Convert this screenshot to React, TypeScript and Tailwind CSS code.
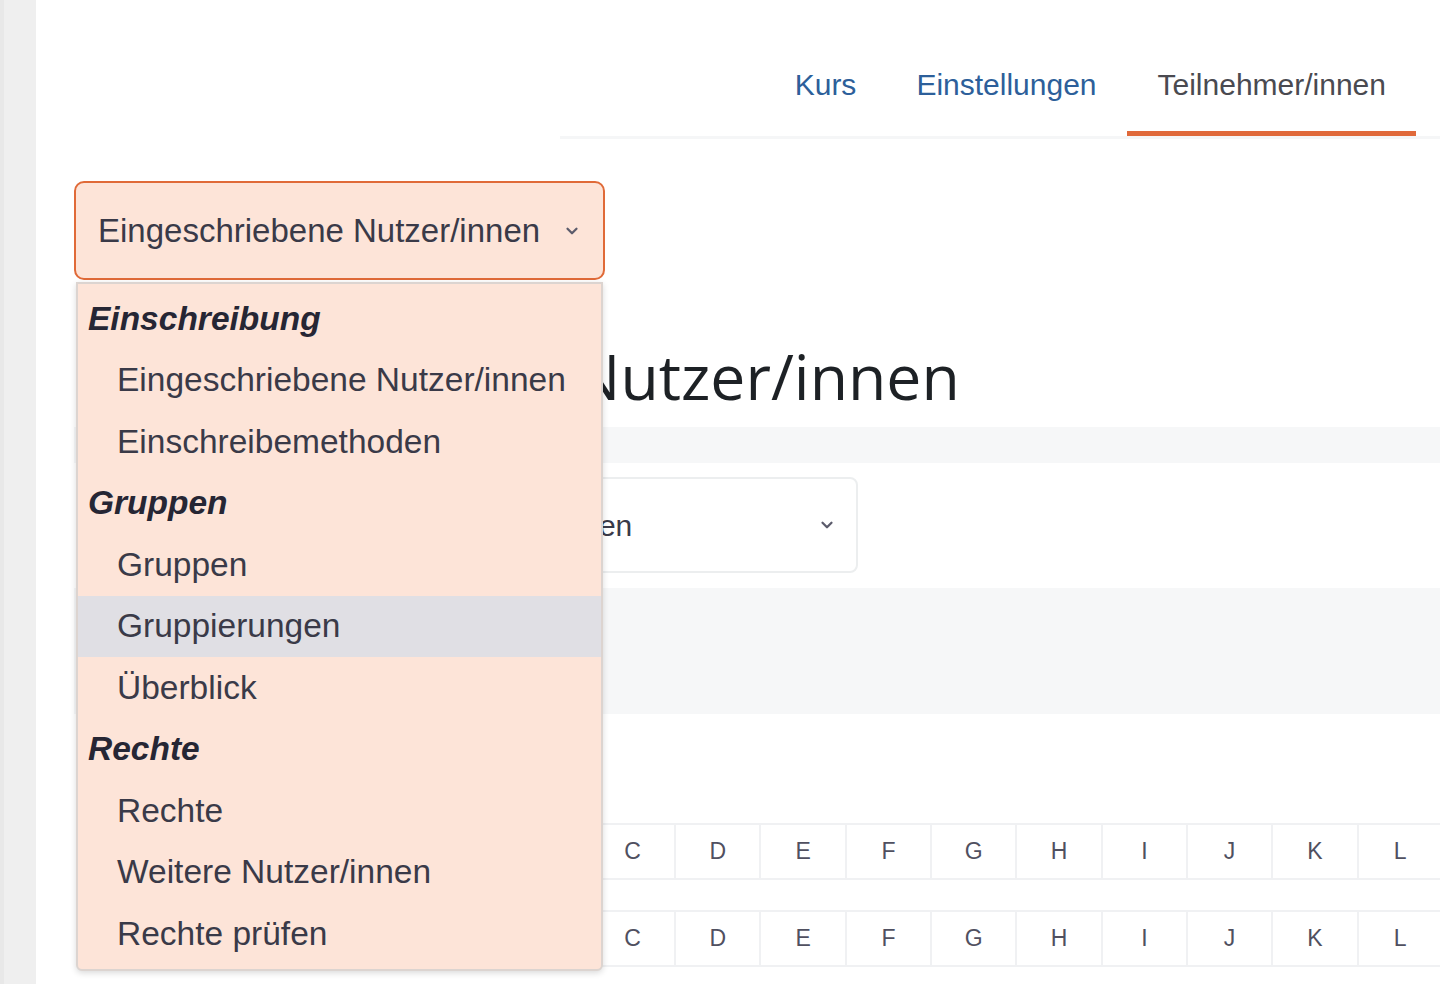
import { ChevronDown } from "lucide-react";

const menu = [
  { group: "Einschreibung", items: ["Eingeschriebene Nutzer/innen", "Einschreibemethoden"] },
  { group: "Gruppen", items: ["Gruppen", "Gruppierungen", "Überblick"] },
  { group: "Rechte", items: ["Rechte", "Weitere Nutzer/innen", "Rechte prüfen"] },
];

const letters = ["Alle", "A", "B", "C", "D", "E", "F", "G", "H", "I", "J", "K", "L"];

function InitialsRow() {
  return (
    <div className="flex h-[57px]">
      {/* label column sits under the open menu */}
      <div className="w-[261px] shrink-0" />
      <div className="flex shrink-0 border-y-2 border-[#f0f1f3]">
        {letters.map((l) => (
          <div
            key={l}
            className="w-[85.3px] shrink-0 flex items-center justify-center border-r-2 border-[#f0f1f3] text-[23px] text-[#505060]"
          >
            {l}
          </div>
        ))}
      </div>
    </div>
  );
}

export default function App() {
  return (
    <div
      className="w-[1440px] h-[991px] bg-white flex overflow-hidden"
      style={{ fontFamily: '"Liberation Sans", Arial, sans-serif' }}
    >
      {/* left drawer edge */}
      <aside className="w-[36px] h-[984px] shrink-0 bg-[#efefef] border-l-4 border-[#e8e8e8]" />

      <main className="flex-1 flex flex-col min-w-0 overflow-hidden">
        {/* course tabs */}
        <nav className="ml-[524px] h-[139px] flex justify-end border-b-[3px] border-[#f5f6f7] pr-[24px]">
          <a className="px-[30px] pt-[38px] flex items-center border-b-[5px] border-transparent text-[30px] text-[#2d5f9a]">
            Kurs
          </a>
          <a className="px-[30px] pt-[38px] flex items-center border-b-[5px] border-transparent text-[30px] text-[#2d5f9a]">
            Einstellungen
          </a>
          <a className="pl-[31px] pr-[30px] pt-[38px] flex items-center border-b-[5px] border-[#e0693a] text-[30px] text-[#4a4a50]">
            Teilnehmer/innen
          </a>
        </nav>

        <div className="pl-[38px] flex flex-col">
          {/* page select with open menu */}
          <div className="relative mt-[42px] w-[531px] z-10">
            <button className="w-[531px] h-[99px] flex items-center justify-between pl-[22px] pr-[22px] bg-[#fde4d8] border-2 border-[#e06a38] rounded-[10px] text-[33px] text-[#3a3a48]">
              <span>Eingeschriebene Nutzer/innen</span>
              <ChevronDown size={18} strokeWidth={3} className="text-[#5c5c6c]" />
            </button>

            <div className="absolute top-[101px] left-[2px] w-[527px] bg-[#fde4d8] border-2 border-[#dcd4d0] rounded-b-[6px] shadow-[0_2px_6px_rgba(0,0,0,0.15)] py-[4px]">
              {menu.map((g) => (
                <div key={g.group}>
                  <div className="h-[61.5px] flex items-center pl-[10px] text-[33.5px] font-bold italic text-[#262634]">
                    {g.group}
                  </div>
                  {g.items.map((item) => (
                    <div
                      key={item}
                      className={
                        "h-[61.5px] flex items-center pl-[39px] text-[33.5px] text-[#3a3a48] " +
                        (item === "Gruppierungen" ? "bg-[#e0dfe4]" : "")
                      }
                    >
                      {item}
                    </div>
                  ))}
                </div>
              ))}
            </div>
          </div>

          <h1
            className="mt-[59px] pl-[4px] text-[62.5px] leading-[74px] text-[#1d2125] whitespace-nowrap"
            style={{ fontFamily: '"Open Sans", sans-serif' }}
          >
            Eingeschriebene Nutzer/innen
          </h1>

          <div className="mt-[14px] h-[36px] bg-[#f6f7f8]" />

          {/* filter select */}
          <div className="mt-[14px] flex items-center">
            <div className="w-[256px] shrink-0" />
            <div className="w-[528px] h-[96px] flex items-center justify-between pl-[14px] pr-[20px] border-2 border-[#eceeef] rounded-[8px] text-[30px] text-[#3a3a48]">
              <span>Alle Teilnehmer/innen</span>
              <ChevronDown size={18} strokeWidth={3} className="text-[#5c5c6c]" />
            </div>
          </div>

          <div className="mt-[15px] h-[126px] bg-[#f6f7f8]" />

          <div className="mt-[109px] flex flex-col gap-[30px]">
            <InitialsRow />
            <InitialsRow />
          </div>
        </div>
      </main>
    </div>
  );
}
